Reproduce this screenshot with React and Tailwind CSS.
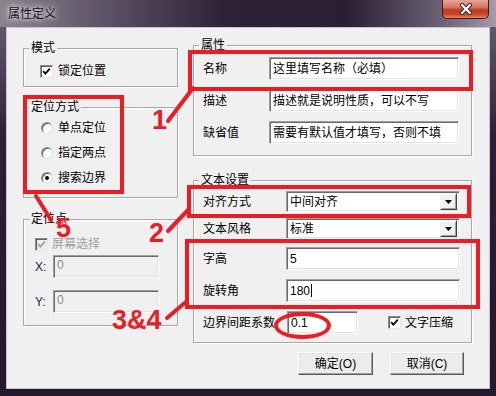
import React from 'react';

function GroupBox({ title, className, children }) {
  return (
    <div className={`relative border border-[#a8a8a8] shadow-[inset_1px_1px_0_#fff,1px_1px_0_#fff] ${className}`}>
      <span className="absolute -top-[8px] left-[5px] px-[2px] bg-[#f0f0f0] leading-[14px]">{title}</span>
      {children}
    </div>
  );
}

function Check({ disabled }) {
  return (
    <span className={`w-[13px] h-[13px] flex items-center justify-center border border-t-[#8a8a8a] border-l-[#8a8a8a] border-r-[#e6e6e6] border-b-[#e6e6e6] shadow-[inset_1px_1px_0_#5f5f5f] ${disabled ? 'bg-[#ececec]' : 'bg-white'}`}>
      <svg width="9" height="9" viewBox="0 0 9 9">
        <path d="M1.2 4.2 L3.4 6.6 L7.8 1.6" stroke={disabled ? '#a0a0a0' : '#000'} strokeWidth="1.8" fill="none" />
      </svg>
    </span>
  );
}

function Radio({ checked, label }) {
  return (
    <div className="flex items-center h-[14px]">
      <span className="w-[12px] h-[12px] rounded-full bg-white border border-t-[#8a8a8a] border-l-[#8a8a8a] border-r-[#e0e0e0] border-b-[#e0e0e0] shadow-[inset_1px_1px_0_#606060] flex items-center justify-center">
        {checked && <span className="w-[4px] h-[4px] rounded-full bg-black" />}
      </span>
      <span className="ml-[5px]">{label}</span>
    </div>
  );
}

function Field({ value, className, disabled, caret }) {
  return (
    <div className={`h-[23px] flex items-center pl-[3px] border border-t-[#a0a0a0] border-l-[#a0a0a0] border-r-white border-b-white shadow-[inset_1px_1px_0_#6a6a6a,inset_-1px_-1px_0_#e3e3e3] ${disabled ? 'bg-[#f0f0f0] text-[#8a8aa0] items-start pt-[2px]' : 'bg-white'} ${className}`}>
      <span>{value}</span>
      {caret && <span className="w-px h-[13px] bg-black ml-[1px]" />}
    </div>
  );
}

function Combo({ value }) {
  return (
    <div className="w-[174px] h-[21px] flex items-center border border-t-[#a0a0a0] border-l-[#a0a0a0] border-r-white border-b-white shadow-[inset_1px_1px_0_#6a6a6a,inset_-1px_-1px_0_#e3e3e3] bg-white pl-[3px] pr-[2px]">
      <span className="flex-1">{value}</span>
      <span className="w-[17px] h-[17px] flex items-center justify-center bg-[#f0f0f0] border border-t-[#f0f0f0] border-l-[#f0f0f0] border-r-[#404040] border-b-[#404040] shadow-[inset_1px_1px_0_#fff,inset_-1px_-1px_0_#a0a0a0]">
        <svg width="7" height="4" viewBox="0 0 7 4"><path d="M0 0 H7 L3.5 4 Z" fill="#000" /></svg>
      </span>
    </div>
  );
}

function Button({ children, className }) {
  return (
    <div className={`h-[23px] flex items-center justify-center bg-[#ececec] border border-t-[#fff] border-l-[#fff] border-r-[#5a5a5a] border-b-[#5a5a5a] shadow-[inset_-1px_-1px_0_#a0a0a0,inset_1px_1px_0_#e3e3e3] ${className}`}>
      {children}
    </div>
  );
}

export default function App() {
  return (
    <div className="relative w-[496px] h-[396px] overflow-hidden flex flex-col bg-[linear-gradient(to_bottom,#6d6575,#2c1f38_35%,#24192e)] font-['Liberation_Sans','Noto_Sans_CJK_SC',sans-serif] text-[12px] leading-[14px] text-black">
      {/* Title bar */}
      <div className="h-[27px] flex items-start justify-between bg-[linear-gradient(to_right,#8a8490,#5b5064_22%,#2e2239_45%,#2a1e35_70%,#6f6679_90%,#a29ba9)]">
        <span className="pl-[8px] pt-[7px] text-[#111] [text-shadow:0_0_4px_#fff,0_0_8px_rgba(255,255,255,0.8)]">属性定义</span>
        <div className="mr-[7px] w-[47px] h-[19px] rounded-b-[5px] border border-t-0 border-[#4a1a12] bg-[linear-gradient(to_bottom,#e8a493,#d77865_40%,#c13b1f_55%,#c9472a_80%,#e58862)] flex items-center justify-center">
          <svg width="14" height="12" viewBox="0 0 14 12">
            <path d="M3 2 L11 10 M11 2 L3 10" stroke="#3a2a2a" strokeWidth="4.2" strokeLinecap="round" />
            <path d="M3 2 L11 10 M11 2 L3 10" stroke="#fff" strokeWidth="2.2" strokeLinecap="round" />
          </svg>
        </div>
      </div>

      {/* Client area */}
      <div className="mx-[6px] h-[362px] border border-[#c9c2d0] bg-[#f0f0f0] flex pl-[16px]">
        {/* Left column */}
        <div className="w-[155px] flex flex-col">
          <GroupBox title="模式" className="mt-[20px] h-[39px] pt-[15px] pl-[16px]">
            <div className="flex items-center">
              <Check />
              <span className="ml-[5px]">锁定位置</span>
            </div>
          </GroupBox>

          <GroupBox title="定位方式" className="mt-[20px] h-[91px] pt-[13px] pl-[17px] flex flex-col gap-[11px]">
            <Radio label="单点定位" />
            <Radio label="指定两点" />
            <Radio checked label="搜索边界" />
          </GroupBox>

          <GroupBox title="定位点" className="mt-[21px] h-[107px] pt-[17px] pl-[11px]">
            <div className="flex items-center">
              <Check disabled />
              <span className="ml-[4px] text-[#a0a0a0]">屏幕选择</span>
            </div>
            <div className="flex items-center mt-[4px]">
              <span className="w-[18px] text-[#1a1a40]">X:</span>
              <Field disabled value="0" className="w-[106px] h-[21px]" />
            </div>
            <div className="flex items-center mt-[12px]">
              <span className="w-[18px] text-[#1a1a40]">Y:</span>
              <Field disabled value="0" className="w-[106px] h-[21px]" />
            </div>
          </GroupBox>
        </div>

        {/* Right column */}
        <div className="w-[279px] ml-[15px] flex flex-col">
          <GroupBox title="属性" className="mt-[17px] h-[111px] pt-[11px] pl-[9px] flex flex-col gap-[9px]">
            {[
              ['名称', '这里填写名称（必填）'],
              ['描述', '描述就是说明性质，可以不写'],
              ['缺省值', '需要有默认值才填写，否则不填'],
            ].map(([label, value]) => (
              <div key={label} className="flex items-center">
                <span className="w-[66px]">{label}</span>
                <Field value={value} className="w-[190px]" />
              </div>
            ))}
          </GroupBox>

          <GroupBox title="文本设置" className="mt-[24px] h-[163px] pt-[10px] pl-[9px]">
            <div className="flex items-center">
              <span className="w-[83px]">对齐方式</span>
              <Combo value="中间对齐" />
            </div>
            <div className="flex items-center mt-[6px]">
              <span className="w-[83px]">文本风格</span>
              <Combo value="标准" />
            </div>
            <div className="flex items-center mt-[8px]">
              <span className="w-[83px]">字高</span>
              <Field value="5" className="w-[174px]" />
            </div>
            <div className="flex items-center mt-[9px]">
              <span className="w-[83px]">旋转角</span>
              <Field value="180" caret className="w-[174px]" />
            </div>
            <div className="flex items-center mt-[9px]">
              <span className="w-[84px]">边界间距系数</span>
              <Field value="0.1" className="w-[71px]" />
              <span className="ml-[30px]"><Check /></span>
              <span className="ml-[4px]">文字压缩</span>
            </div>
          </GroupBox>

          <div className="mt-[9px] flex justify-end pr-[8px] gap-[17px]">
            <Button className="w-[75px]">确定(O)</Button>
            <Button className="w-[74px]">取消(C)</Button>
          </div>
        </div>
      </div>

      {/* Red annotations */}
      <div className="absolute left-[23px] top-[95px] w-[101px] h-[99px] border-4 border-[#ec1c24]" />
      <div className="absolute left-[188px] top-[50px] w-[285px] h-[41px] border-4 border-[#ec1c24]" />
      <div className="absolute left-[187px] top-[185px] w-[284px] h-[33px] border-4 border-[#ec1c24]" />
      <div className="absolute left-[185px] top-[239px] w-[295px] h-[70px] border-4 border-[#ec1c24]" />
      <div className="absolute left-[274px] top-[312px] w-[57px] h-[27px] rounded-[50%] border-4 border-[#ec1c24]" />
      <svg className="absolute inset-0 pointer-events-none" width="496" height="396">
        <g stroke="#ec1c24" strokeWidth="4" strokeLinecap="round">
          <line x1="168" y1="121" x2="193" y2="88" />
          <line x1="36" y1="196" x2="51" y2="220" />
          <line x1="168" y1="231" x2="188" y2="210" />
          <line x1="167" y1="318" x2="187" y2="301" />
        </g>
      </svg>
      <span className="absolute left-[152px] top-[107px] text-[27px] leading-[27px] font-bold text-[#ec1c24] font-['Liberation_Sans',sans-serif]">1</span>
      <span className="absolute left-[56px] top-[215px] text-[27px] leading-[27px] font-bold text-[#ec1c24] font-['Liberation_Sans',sans-serif]">5</span>
      <span className="absolute left-[149px] top-[220px] text-[27px] leading-[27px] font-bold text-[#ec1c24] font-['Liberation_Sans',sans-serif]">2</span>
      <span className="absolute left-[112px] top-[307px] text-[27px] leading-[27px] font-bold text-[#ec1c24] font-['Liberation_Sans',sans-serif]">3&amp;4</span>
    </div>
  );
}
